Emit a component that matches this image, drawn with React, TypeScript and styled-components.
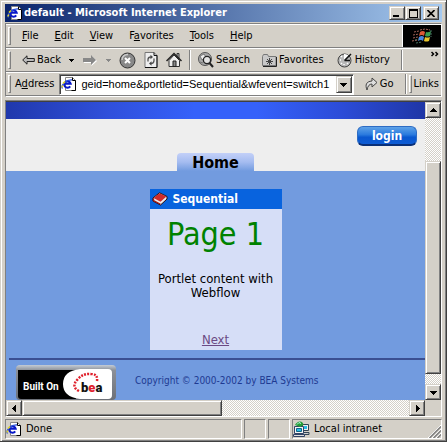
import React from "react";
import styled, { createGlobalStyle, css } from "styled-components";

const FACE = "#d4d0c8";
const SHADOW = "#808080";
const DARK = "#404040";
const PAGE_BLUE = "#729bdf";

const GlobalStyle = createGlobalStyle`
  * { box-sizing: border-box; }
  body {
    margin: 0;
    background: ${FACE};
    font: 11px/14px "DejaVu Sans Condensed", "DejaVu Sans", Tahoma, sans-serif;
    color: #000;
  }
  button, input { font: inherit; color: inherit; margin: 0; padding: 0; border: 0; border-radius: 0; }
  button { background: none; }
  svg { display: block; flex: none; }
`;

const raised = css`
  background: ${FACE};
  border: 1px solid;
  border-color: ${FACE} ${DARK} ${DARK} ${FACE};
  box-shadow: inset 1px 1px #fff, inset -1px -1px ${SHADOW};
`;

const Window = styled.div`
  display: flex;
  flex-direction: column;
  min-height: 100vh;
  padding: 4px 4px 2px 5px;
  border-right: 1px solid ${DARK};
  border-bottom: 1px solid ${DARK};
  background: ${FACE};
  box-shadow: inset 1px 1px ${FACE}, inset 2px 2px #fff, inset -1px -1px ${SHADOW};
`;

const TitleBar = styled.header`
  display: flex;
  align-items: center;
  gap: 1px;
  height: 18px;
  padding: 0 3px 0 2px;
  background: linear-gradient(90deg, #0a246a, #a6caf0);
`;

const Title = styled.h1`
  flex: 1;
  margin: 0;
  font-size: 11px;
  line-height: 14px;
  font-weight: bold;
  color: #fff;
  white-space: nowrap;
`;

const CaptionGroup = styled.div`
  display: flex;
`;

const CaptionButton = styled.button<{ $apart?: boolean }>`
  ${raised}
  display: grid;
  place-items: center;
  width: 16px;
  height: 14px;
  margin-left: ${(p) => (p.$apart ? "2px" : "0")};
`;

const Rebar = styled.div`
  margin-top: 1px;
  border: 1px solid;
  border-color: ${SHADOW} #fff #fff ${SHADOW};
`;

const Band = styled.div`
  display: flex;
  align-items: center;
  height: 24px;
  padding-left: 2px;
  border-top: 1px solid #fff;
  border-bottom: 1px solid ${SHADOW};
  white-space: nowrap;
`;

const Grip = styled.span<{ $gap?: number }>`
  flex: none;
  width: 3px;
  height: 18px;
  margin-left: ${(p) => p.$gap ?? 0}px;
  border: 1px solid;
  border-color: #fff ${SHADOW} ${SHADOW} #fff;
`;

const MenuItems = styled.nav`
  display: flex;
  flex: 1;
  padding-left: 3px;
`;

const MenuButton = styled.button`
  padding: 2px 8px;
`;

const Throbber = styled.div`
  display: grid;
  place-items: center;
  align-self: stretch;
  width: 39px;
  border-left: 1px solid #fff;
  background: #000;
`;

const ToolButton = styled.button<{ $gap?: number }>`
  display: flex;
  align-items: center;
  gap: 2px;
  margin-left: ${(p) => p.$gap ?? 8}px;
`;

const Divider = styled.span<{ $gap?: number }>`
  flex: none;
  width: 2px;
  height: 20px;
  margin-left: ${(p) => p.$gap ?? 7}px;
  border-left: 1px solid ${SHADOW};
  border-right: 1px solid #fff;
`;

const Chevron = styled.button`
  align-self: flex-start;
  margin-left: auto;
  padding-right: 2px;
`;

const AddressLabel = styled.label`
  padding: 0 5px 0 4px;
`;

const AddressBox = styled.div`
  display: flex;
  align-items: center;
  flex: 1;
  min-width: 0;
  height: 21px;
  padding: 1px;
  background: #fff;
  border: 1px solid;
  border-color: ${SHADOW} #fff #fff ${SHADOW};
  box-shadow: inset 1px 1px ${DARK};
`;

const AddressInput = styled.input`
  flex: 1;
  min-width: 0;
  height: 15px;
  margin-left: 4px;
  background: transparent;
  outline: none;
  font-family: "Liberation Sans", Arial, sans-serif;
`;

const DropButton = styled.button`
  ${raised}
  display: grid;
  place-items: center;
  flex: none;
  width: 16px;
  height: 17px;
`;

const LinksLabel = styled.button`
  padding: 0 2px;
`;

const Viewport = styled.div`
  display: grid;
  flex: 1;
  grid-template-columns: 1fr 16px;
  grid-template-rows: 1fr 16px;
  margin-top: 3px;
  border: 1px solid;
  border-color: ${SHADOW} #fff #fff ${SHADOW};
  box-shadow: inset 0 1px ${DARK};
  padding-top: 1px;
`;

const Page = styled.main`
  display: flex;
  flex-direction: column;
  min-width: 0;
  background: ${PAGE_BLUE};
`;

const Banner = styled.div`
  height: 17px;
  background: linear-gradient(90deg, #2038ac, #3050dc 25%, #3561fa 45%, #3561fa 60%, #2c4cd8 80%, #1f36a6);
`;

const PageHeader = styled.div`
  display: grid;
  grid-template-rows: 27px 25px;
  height: 52px;
  background: #eee;
`;

const LoginButton = styled.button`
  justify-self: end;
  align-self: end;
  width: 60px;
  height: 20px;
  margin-right: 8px;
  border-radius: 6px;
  border: 1px solid #2d6cc4;
  border-bottom: 2px solid #0a3078;
  background: linear-gradient(#5ea2e8, #2a7ade 45%, #0a58d0 60%, #0e5cd4);
  color: #fff;
  font-size: 12px;
  line-height: 16px;
  font-weight: bold;
`;

const Tab = styled.a`
  justify-self: center;
  align-self: end;
  width: 77px;
  height: 18px;
  border-radius: 4px 4px 0 0;
  background: linear-gradient(#c3d0f8, #a5bcf0 50%, ${PAGE_BLUE});
  color: #000;
  font-size: 16px;
  line-height: 19px;
  font-weight: bold;
  text-align: center;
  text-decoration: none;
`;

const Portlet = styled.section`
  align-self: center;
  width: 132px;
  margin: 18px 0 8px;
  background: #d6def7;
  font-size: 13px;
  text-align: center;
`;

const PortletBar = styled.h2`
  display: flex;
  align-items: center;
  gap: 5px;
  height: 20px;
  margin: 0;
  padding-left: 2px;
  background: #0863de;
  color: #fff;
  font-size: 12px;
  line-height: 20px;
  font-weight: bold;
`;

const PortletHeading = styled.h3`
  margin: 0;
  padding: 5px 0 18px;
  color: #008200;
  font-size: 32px;
  line-height: 40px;
  font-weight: normal;
`;

const PortletText = styled.p`
  margin: 0;
  padding-bottom: 33px;
  line-height: 14px;
`;

const NextLink = styled.a`
  display: inline-block;
  padding-bottom: 3px;
  color: #6b4a84;
  line-height: 14px;
`;

const PageFooter = styled.footer`
  display: flex;
  align-items: center;
  gap: 19px;
  margin-left: 3px;
  padding: 5px 0 0 7px;
  margin-top: auto;
  border-top: 2px solid #3a4f92;
  color: #1e3a92;
  font-size: 10px;
  line-height: 12px;
`;

const Copyright = styled.p`
  margin: 0;
  padding-bottom: 3px;
`;

const Track = styled.div<{ $vertical?: boolean }>`
  display: flex;
  flex-direction: ${(p) => (p.$vertical ? "column" : "row")};
  background: repeating-conic-gradient(#fff 0 25%, ${FACE} 0 50%) 0 0 / 2px 2px;
`;

const Space = styled.span<{ $grow: number }>`
  flex: ${(p) => p.$grow} 1 0;
`;

const Thumb = styled.div<{ $grow: number }>`
  ${raised}
  flex: ${(p) => p.$grow} 1 0;
`;

const ScrollButton = styled.button`
  ${raised}
  display: grid;
  place-items: center;
  flex: none;
  width: 16px;
  height: 16px;
`;

const StatusBar = styled.footer`
  display: flex;
  gap: 2px;
  height: 20px;
  margin-top: 2px;
`;

const Pane = styled.div<{ $width?: number }>`
  display: flex;
  align-items: center;
  gap: 4px;
  flex: ${(p) => (p.$width ? `0 0 ${p.$width}px` : "1")};
  border: 1px solid;
  border-color: ${SHADOW} #fff #fff ${SHADOW};
  white-space: nowrap;
`;

const SizeGrip = styled.span`
  align-self: flex-end;
  margin-left: auto;
`;

const Arrow = ({ dir }: { dir: "up" | "down" | "left" | "right" }) => {
  const turn = { down: 0, left: 90, up: 180, right: 270 }[dir];
  return (
    <svg width="7" height="7" viewBox="0 0 7 7" shapeRendering="crispEdges" aria-hidden>
      <path d="M0 2h7v1h-1v1h-1v1h-1v1h-1v-1h-1v-1h-1v-1h-1z" transform={`rotate(${turn} 3.5 3.5)`} />
    </svg>
  );
};

const Caret = ({ color = "#000" }: { color?: string }) => (
  <svg width="5" height="4" viewBox="0 0 5 4" shapeRendering="crispEdges" aria-hidden>
    <path d="M0 1h5v1h-1v1h-1v1h-1v-1h-1v-1h-1z" fill={color} />
  </svg>
);

const IePage = () => (
  <svg width="16" height="16" viewBox="0 0 16 16" aria-hidden>
    <path d="M4.500 1.500h7l3 3v10h-10z" fill="#fff" stroke="#888" />
    <path d="M11.500 1.500v3h3v10h-4" fill="none" stroke="#000" />
    <path d="M9.200 10.300a3.300 3.200 0 1 1 .5-2.600H4" fill="none" stroke="#0818c8" strokeWidth="2" />
    <path d="M1.500 12.500C-1 10 5 3.500 11 4" fill="none" stroke="#2a50d8" strokeWidth="1.300" />
    <path d="M2 7.500l2-2M.8 11.500l1-2" stroke="#e8d820" strokeWidth="1.500" />
  </svg>
);

const Flag = () => (
  <svg width="20" height="17" viewBox="0 0 20 17" aria-hidden>
    <path d="M8 4q3-2 5 0l-1 4q-2-2-5 0z" fill="#dd5a38" />
    <path d="M14 4q2 1 5-1l-1 5q-3 1-5 0z" fill="#3aa052" />
    <path d="M7 9q3-2 5 0l-1 4q-2-2-5 0z" fill="#4a87e0" />
    <path d="M13 9q2 1 5 0l-1 4q-3 1-5 0z" fill="#e8c52c" />
    <path d="M2 4l5-1M1 7l6-1M1 10l5-1M0 13l6-1M8 2l5-1 5 1" stroke="#a5665b" strokeDasharray="2 1" />
    <path d="M3 12l4-1M4 15l6-1M19 2v7" stroke="#477060" strokeDasharray="2 1" />
  </svg>
);

const BackArrow = () => (
  <svg width="13" height="10" viewBox="0 0 13 10" aria-hidden>
    <path d="M.7 5L5 .8v2.700h7.300v3H5v2.700z" fill="#bbb" stroke="#222" />
  </svg>
);

const ForwardArrow = () => (
  <svg width="14" height="11" viewBox="0 0 14 11" aria-hidden>
    <path d="M14 6L8.500 11V8H1V4h8V1z" fill="#fff" />
    <path d="M13 5L8 0v3H0v4h8v3z" fill="#888" />
  </svg>
);

const StopIcon = () => (
  <svg width="17" height="17" viewBox="0 0 17 17" aria-hidden>
    <circle cx="8.500" cy="8.500" r="7.500" fill="#888" stroke="#333" />
    <path d="M3 8a5.500 5.500 0 0 1 6-5.500" fill="none" stroke="#ccc" strokeWidth="1.500" />
    <path d="M6 6l5 5M11 6l-5 5" stroke="#fff" strokeWidth="2" />
  </svg>
);

const RefreshIcon = () => (
  <svg width="14" height="16" viewBox="0 0 14 16" aria-hidden>
    <path d="M1 .5h9l3 3v12H1z" fill="#eee" stroke="#777" />
    <path d="M10 .5v3h3v12H1" fill="none" stroke="#111" />
    <path d="M4 9.500V7.500q0-2.500 3-2.500M10 6.500v2q0 3-3 3" fill="none" stroke="#555" strokeWidth="1.300" />
    <path d="M6.500 2.800L9 5l-2.500 2.200zM7.500 9.300v4.400L5 11.500z" fill="#444" />
  </svg>
);

const HomeIcon = () => (
  <svg width="16" height="16" viewBox="0 0 16 16" aria-hidden>
    <path d="M3 8.500L8 3l5.500 5.500v6H3z" fill="#eee" stroke="#333" />
    <path d="M11 1.500h2v5l-2-2z" fill="#bbb" stroke="#333" />
    <path d="M.5 9L8 1.500 15.500 9" fill="none" stroke="#222" strokeWidth="1.500" />
    <path d="M7 9h3v5.500H7z" fill="#888" stroke="#222" />
  </svg>
);

const SearchIcon = () => (
  <svg width="16" height="16" viewBox="0 0 16 16" aria-hidden>
    <circle cx="7" cy="7" r="6.500" fill="#aaa" stroke="#555" />
    <path d="M2 4l4-2 2 3-4 3zM2 10l3 1" fill="#eee" stroke="#777" />
    <circle cx="9" cy="8" r="3.600" fill="#e4e4e4" stroke="#222" strokeWidth="1.300" />
    <path d="M11.500 11l3.500 4" stroke="#222" strokeWidth="2" />
  </svg>
);

const FavoritesIcon = () => (
  <svg width="15" height="14" viewBox="0 0 15 14" aria-hidden>
    <path d="M.5 3.500l1-2h4l1 2h7.500v9H.5z" fill="#c8c8c8" stroke="#777" />
    <path d="M14.500 4v9.500H1" fill="none" stroke="#222" />
    <path d="M7.500 5v7M4 8.500h7M5 6l5 5M10 6l-5 5" stroke="#444" />
  </svg>
);

const HistoryIcon = () => (
  <svg width="16" height="16" viewBox="0 0 16 16" aria-hidden>
    <circle cx="7.500" cy="8.500" r="6.500" fill="#b8b8b8" stroke="#444" />
    <path d="M7 8V2a6 6 0 0 1 4.500 1.500z" fill="#fff" />
    <path d="M7.500 8.500L14 2M7.500 8.500H13" stroke="#111" strokeWidth="1.500" />
    <path d="M3 8h1M7 13v-1M4 4l1 1M4 12l1-1M11 12l-1-1" stroke="#fff" strokeWidth="1.500" />
  </svg>
);

const GoIcon = () => (
  <svg width="13" height="14" viewBox="0 0 13 14" aria-hidden>
    <path d="M2 13C0 8 1 4.500 7 4V1l5 4.500L7 10V7Q3 7 2 13z" fill="#ddd" stroke="#444" />
  </svg>
);

const BookIcon = () => (
  <svg width="16" height="14" viewBox="0 0 16 14" aria-hidden>
    <path d="M1 6L7.500 .8 15 4.500v2.500L8.500 13 1 9z" fill="#eee" stroke="#260808" />
    <path d="M1.500 6L7.500 1.200 14.500 4.500 8.500 9.800z" fill="#d02b2b" />
    <path d="M1.500 6.500v2l7 3.800" fill="none" stroke="#a01818" strokeWidth="1.300" />
  </svg>
);

const IntranetIcon = () => (
  <svg width="17" height="16" viewBox="0 0 17 16" aria-hidden>
    <path d="M9.500 3.500h6v6h-6z" fill="#eee" stroke="#345" />
    <path d="M11 5h3v3h-3z" fill="#28bce8" />
    <path d="M10 11.500h6v2h-5" fill="#ccc" stroke="#345" />
    <path d="M1.500 5.500h9v7h-9z" fill="#f4f4f4" stroke="#346" />
    <path d="M3.500 7.500h5v3h-5z" fill="#28bce8" stroke="#168" />
    <path d="M.5 13.500h11v2H.5z" fill="#ddd" stroke="#346" />
    <path d="M2 4q2-3.500 5-3.500T10.500 4L7 6z" fill="#239b36" />
    <path d="M4 3.500l2-2 2 1" fill="none" stroke="#bfe" />
  </svg>
);

const BeaBadge = () => (
  <svg width="100" height="35" viewBox="0 0 100 35" role="img" aria-label="Built On bea">
    <defs>
      <linearGradient id="bezel" x1="0" y1="0" x2="0" y2="1">
        <stop offset="0" stopColor="#c4ccd6" />
        <stop offset=".15" stopColor="#8c9098" />
        <stop offset="1" stopColor="#6c7078" />
      </linearGradient>
    </defs>
    <rect width="100" height="35" rx="4" fill="url(#bezel)" />
    <path d="M2 5h58v29H5q-3 0-3-3z" fill="#000" />
    <path d="M64 4h28q4 0 4 4v22q0 4-4 4H64Q47 32 47 19T64 4z" fill="#fff" />
    <path d="M63 26Q55 22 61 15T75 9q7 0 6 7" fill="none" stroke="#e0202c" strokeWidth="2.500" strokeDasharray="2 1.200" />
    <text x="7" y="25" fill="#fff" fontFamily="Roboto, sans-serif" fontWeight="700" fontSize="10">Built On</text>
    <text x="65" y="27" fill="#111" fontFamily="Roboto, sans-serif" fontWeight="900" fontSize="13">
      b<tspan fill="#e0202c">e</tspan>a
    </text>
  </svg>
);

export default function App() {
  return (
    <>
      <GlobalStyle />
      <Window>
        <TitleBar>
          <IePage />
          <Title>default - Microsoft Internet Explorer</Title>
          <CaptionGroup>
            <CaptionButton aria-label="Minimize">
              <svg width="8" height="8" viewBox="0 0 8 8"><path d="M0 6h6v2H0z" /></svg>
            </CaptionButton>
            <CaptionButton aria-label="Maximize">
              <svg width="9" height="9" viewBox="0 0 9 9"><path d="M0 0h9v9H0zM1 2v6h7V2z" fillRule="evenodd" /></svg>
            </CaptionButton>
            <CaptionButton aria-label="Close" $apart>
              <svg width="8" height="7" viewBox="0 0 8 7"><path d="M.5 0l7 7M7.500 0l-7 7" stroke="#000" strokeWidth="1.600" /></svg>
            </CaptionButton>
          </CaptionGroup>
        </TitleBar>

        <Rebar>
          <Band>
            <Grip />
            <MenuItems>
              <MenuButton><u>F</u>ile</MenuButton>
              <MenuButton><u>E</u>dit</MenuButton>
              <MenuButton><u>V</u>iew</MenuButton>
              <MenuButton>F<u>a</u>vorites</MenuButton>
              <MenuButton><u>T</u>ools</MenuButton>
              <MenuButton><u>H</u>elp</MenuButton>
            </MenuItems>
            <Throbber><Flag /></Throbber>
          </Band>
          <Band>
            <Grip />
            <ToolButton $gap={11}><BackArrow />Back</ToolButton>
            <ToolButton aria-label="Back history"><Caret /></ToolButton>
            <ToolButton $gap={9} aria-label="Forward"><ForwardArrow /></ToolButton>
            <ToolButton $gap={9} aria-label="Forward history"><Caret color="#888" /></ToolButton>
            <ToolButton aria-label="Stop"><StopIcon /></ToolButton>
            <ToolButton aria-label="Refresh"><RefreshIcon /></ToolButton>
            <ToolButton aria-label="Home"><HomeIcon /></ToolButton>
            <Divider />
            <ToolButton $gap={7}><SearchIcon />Search</ToolButton>
            <ToolButton $gap={12}><FavoritesIcon />Favorites</ToolButton>
            <ToolButton $gap={13}><HistoryIcon />History</ToolButton>
            <Divider $gap={11} />
            <Chevron aria-label="More tools">
              <svg width="8" height="9" viewBox="0 0 8 9"><path d="M.5 3l2 2-2 2M4.500 3l2 2-2 2" fill="none" stroke="#000" strokeWidth="1.500" /></svg>
            </Chevron>
          </Band>
          <Band>
            <Grip />
            <AddressLabel htmlFor="address">A<u>d</u>dress</AddressLabel>
            <AddressBox>
              <IePage />
              <AddressInput id="address" defaultValue="geid=home&portletid=Sequential&wfevent=switch1" />
              <DropButton aria-label="Show addresses"><Arrow dir="down" /></DropButton>
            </AddressBox>
            <ToolButton $gap={11}><GoIcon />Go</ToolButton>
            <Divider $gap={11} />
            <Grip $gap={2} />
            <LinksLabel>Links</LinksLabel>
          </Band>
        </Rebar>

        <Viewport>
          <Page>
            <Banner />
            <PageHeader>
              <LoginButton>login</LoginButton>
              <Tab href="#home">Home</Tab>
            </PageHeader>
            <Portlet>
              <PortletBar><BookIcon />Sequential</PortletBar>
              <PortletHeading>Page 1</PortletHeading>
              <PortletText>Portlet content with Webflow</PortletText>
              <NextLink href="#next">Next</NextLink>
            </Portlet>
            <PageFooter>
              <BeaBadge />
              <Copyright>Copyright © 2000-2002 by BEA Systems</Copyright>
            </PageFooter>
          </Page>
          <Track $vertical>
            <ScrollButton aria-label="Scroll up"><Arrow dir="up" /></ScrollButton>
            <Space $grow={43} />
            <Thumb $grow={213} />
            <Space $grow={10} />
            <ScrollButton aria-label="Scroll down"><Arrow dir="down" /></ScrollButton>
          </Track>
          <Track>
            <ScrollButton aria-label="Scroll left"><Arrow dir="left" /></ScrollButton>
            <Thumb $grow={199} />
            <Space $grow={188} />
            <ScrollButton aria-label="Scroll right"><Arrow dir="right" /></ScrollButton>
          </Track>
        </Viewport>

        <StatusBar>
          <Pane><IePage />Done</Pane>
          <Pane $width={22} />
          <Pane $width={22} />
          <Pane $width={150}>
            <IntranetIcon />Local intranet
            <SizeGrip>
              <svg width="13" height="13" viewBox="0 0 13 13">
                <path d="M0 13L13 0M4 13L13 4M8 13L13 8" stroke="#fff" />
                <path d="M1.500 13L13 1.500M5.500 13L13 5.500M9.500 13L13 9.500" stroke="#808080" strokeWidth="1.500" />
              </svg>
            </SizeGrip>
          </Pane>
        </StatusBar>
      </Window>
    </>
  );
}
